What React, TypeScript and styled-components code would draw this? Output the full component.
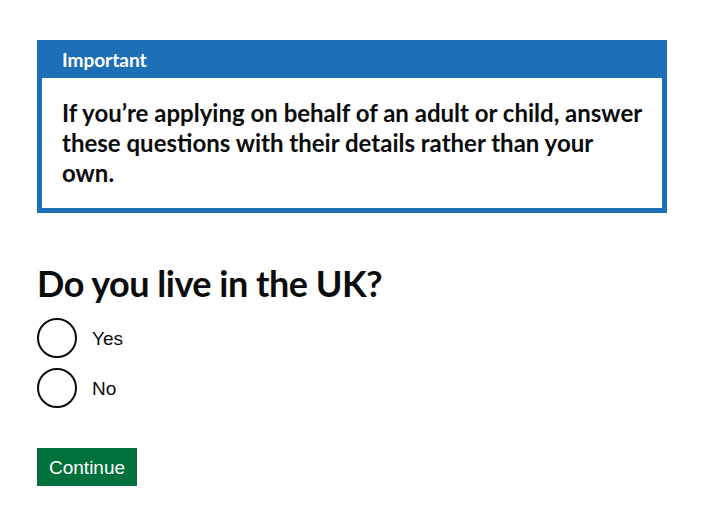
import React from "react";
import styled, { createGlobalStyle } from "styled-components";

const GlobalStyle = createGlobalStyle`
  html, body { margin: 0; padding: 0; background: #ffffff; }
  body { font-family: "Liberation Sans", Arial, sans-serif; color: #0b0c0c; }
  * { box-sizing: border-box; }
`;

const Page = styled.main`
  padding: 40px 43px 0 37px;
  width: 710px;
`;

const Banner = styled.section`
  border: 5px solid #1d70b8;
  background: #1d70b8;
  margin-bottom: 50px;
`;

const BannerHeader = styled.div`
  padding: 2px 20px 5px;
  border-bottom: 1px solid transparent;
`;

const BannerTitle = styled.h2`
  margin: 0;
  font-family: "Lato", sans-serif;
  font-weight: 700;
  font-size: 19px;
  line-height: 25px;
  color: #ffffff;
`;

const BannerContent = styled.div`
  background: #ffffff;
  padding: 20px;
`;

const BannerHeading = styled.p`
  margin: 0;
  font-family: "Lato", sans-serif;
  font-weight: 700;
  font-size: 24px;
  line-height: 30px;
  color: #0b0c0c;
`;

const Fieldset = styled.fieldset`
  margin: 0 0 40px;
  padding: 0;
  border: 0;
`;

const Legend = styled.legend`
  padding: 0;
  margin: 0 0 15px;
  font-family: "Lato", sans-serif;
  font-weight: 700;
  font-size: 36px;
  line-height: 40px;
  letter-spacing: -0.5px;
  color: #0b0c0c;
`;

const Radios = styled.div`
  display: flex;
  flex-direction: column;
  gap: 10px;
`;

const RadioItem = styled.label`
  display: flex;
  align-items: center;
  gap: 15px;
  cursor: pointer;
`;

const RadioCircle = styled.span`
  width: 40px;
  height: 40px;
  border: 2px solid #0b0c0c;
  border-radius: 50%;
  flex: none;
`;

const RadioLabel = styled.span`
  font-family: "Liberation Sans", Arial, sans-serif;
  font-size: 19px;
  line-height: 25px;
  color: #0b0c0c;
`;

const Button = styled.button`
  display: inline-block;
  margin: 0;
  padding: 8px 10px 7px;
  border: 2px solid transparent;
  border-radius: 0;
  background: #00703c;
  box-shadow: 0 2px 0 #002d18;
  color: #ffffff;
  font-family: "Liberation Sans", Arial, sans-serif;
  font-size: 19px;
  line-height: 1;
  cursor: pointer;
`;

const options = ["Yes", "No"];

export default function App() {
  return (
    <Page>
      <GlobalStyle />
      <Banner>
        <BannerHeader>
          <BannerTitle>Important</BannerTitle>
        </BannerHeader>
        <BannerContent>
          <BannerHeading>
            If you’re applying on behalf of an adult or child, answer these questions with their details rather than your own.
          </BannerHeading>
        </BannerContent>
      </Banner>
      <Fieldset>
        <Legend>Do you live in the UK?</Legend>
        <Radios>
          {options.map((o) => (
            <RadioItem key={o}>
              <RadioCircle />
              <RadioLabel>{o}</RadioLabel>
            </RadioItem>
          ))}
        </Radios>
      </Fieldset>
      <Button type="button">Continue</Button>
    </Page>
  );
}
